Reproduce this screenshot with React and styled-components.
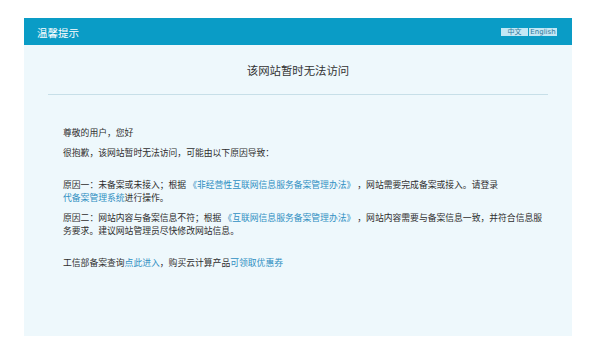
import React from "react";
import styled, { createGlobalStyle } from "styled-components";

const GlobalStyle = createGlobalStyle`
  html, body {
    margin: 0;
    padding: 0;
    background: #ffffff;
  }
  body {
    font-family: "Noto Sans CJK SC", "Noto Sans", sans-serif;
  }
`;

const Page = styled.div`
  width: 600px;
  height: 351px;
  padding: 18px 0 0 24px;
  box-sizing: border-box;
`;

const Panel = styled.div`
  width: 548px;
  height: 318px;
  background: #eef8fc;
  display: flex;
  flex-direction: column;
`;

const Header = styled.div`
  height: 27px;
  background: #0a9cc6;
  display: flex;
  align-items: center;
  justify-content: space-between;
  padding: 0 15px 0 13px;
  color: #ffffff;
  font-size: 10.5px;
`;

const HeaderTitle = styled.span`
  line-height: 27px;
  padding-top: 1px;
`;

const LangSwitch = styled.div`
  display: flex;
  gap: 1px;
`;

const LangButton = styled.span`
  width: ${(p) => p.$w}px;
  height: 8px;
  background: #c3e7f5;
  color: #2f7a9c;
  font-family: "DejaVu Sans", "Noto Sans CJK SC", sans-serif;
  font-size: 7px;
  line-height: 8px;
  text-align: center;
`;

const Title = styled.div`
  height: 49px;
  margin: 0 24px;
  border-bottom: 1px solid #c7dfe8;
  display: flex;
  align-items: center;
  justify-content: center;
  color: #333333;
  font-size: 11.4px;
`;

const Body = styled.div`
  padding: 31px 0 0 39px;
  width: 482px;
  color: #2e2e2e;
  font-size: 8.8px;
  line-height: 13px;
`;

const Para = styled.p`
  margin: 0 0 ${(p) => (p.$gap ? 19 : 7)}px;
`;

const Link = styled.a`
  color: #2f8fc2;
  text-decoration: none;
  white-space: ${(p) => (p.$nowrap ? "nowrap" : "normal")};
`;

export default function App() {
  return (
    <>
      <GlobalStyle />
      <Page>
        <Panel>
          <Header>
            <HeaderTitle>温馨提示</HeaderTitle>
            <LangSwitch>
              <LangButton $w={27}>中文</LangButton>
              <LangButton $w={28}>English</LangButton>
            </LangSwitch>
          </Header>
          <Title>该网站暂时无法访问</Title>
          <Body>
            <Para>尊敬的用户，您好</Para>
            <Para $gap>很抱歉，该网站暂时无法访问，可能由以下原因导致：</Para>
            <Para>
              原因一：未备案或未接入；根据{" "}
              <Link>《非经营性互联网信息服务备案管理办法》</Link>{" "}
              ，网站需要完成备案或接入。请登录
              <Link $nowrap>代备案管理系统</Link>进行操作。
            </Para>
            <Para $gap>
              原因二：网站内容与备案信息不符；根据{" "}
              <Link>《互联网信息服务备案管理办法》</Link>{" "}
              ，网站内容需要与备案信息一致，并符合信息服务要求。建议网站管理员尽快修改网站信息。
            </Para>
            <Para>
              工信部备案查询<Link>点此进入</Link>，购买云计算产品
              <Link>可领取优惠券</Link>
            </Para>
          </Body>
        </Panel>
      </Page>
    </>
  );
}
